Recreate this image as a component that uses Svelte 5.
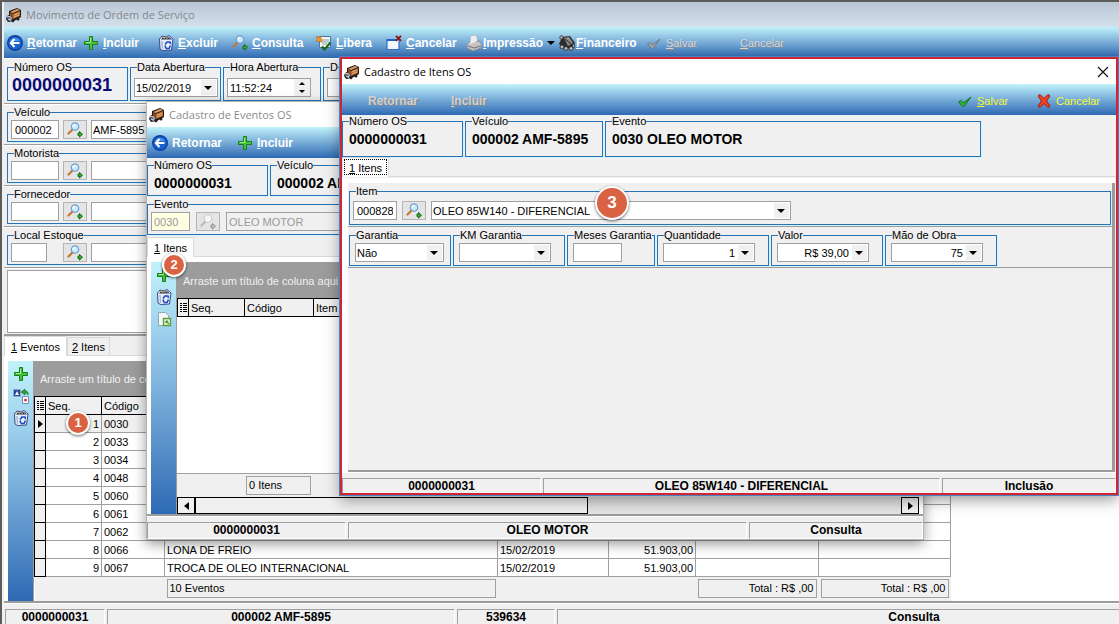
<script>
  const mainTools = [
    { icon: 'back', key: 'R', rest: 'etornar', width: 76 },
    { icon: 'plus', key: 'I', rest: 'ncluir', width: 75 },
    { icon: 'trash', key: 'E', rest: 'xcluir', width: 74 },
    { icon: 'lens', key: 'C', rest: 'onsulta', width: 84 },
    { icon: 'release', key: 'L', rest: 'ibera', width: 70 },
    { icon: 'cancelDoc', key: 'C', rest: 'ancelar', width: 80 },
    { icon: 'printer', key: 'I', rest: 'mpressão', width: 93, arrow: true, tight: true },
    { icon: 'finance', key: 'F', rest: 'inanceiro', width: 87, tight: true },
    { icon: 'checkGray', key: 'S', rest: 'alvar', width: 74, off: true },
    { icon: 'none', key: 'C', rest: 'ancelar', width: 80, off: true }
  ];

  const lookups = [
    { id: 'veiculo', label: 'Veículo', code: '000002', text: 'AMF-5895', width: 48 },
    { id: 'motorista', label: 'Motorista', code: '', text: '', width: 48 },
    { id: 'fornecedor', label: 'Fornecedor', code: '', text: '', width: 48 },
    { id: 'local', label: 'Local Estoque', code: '', text: '', width: 36 }
  ];

  const events = [
    { code: '0030' },
    { code: '0033' },
    { code: '0034' },
    { code: '0048' },
    { code: '0060' },
    { code: '0061' },
    { code: '0062' },
    { code: '0066', name: 'LONA DE FREIO', date: '15/02/2019', km: '51.903,00' },
    { code: '0067', name: 'TROCA DE OLEO INTERNACIONAL', date: '15/02/2019', km: '51.903,00' }
  ];

  const itemFields = [
    { id: 'garantia', label: 'Garantia', value: 'Não', width: 102, input: 89 },
    { id: 'km', label: 'KM Garantia', value: '', width: 112, input: 92 },
    { id: 'meses', label: 'Meses Garantia', value: '', width: 88, input: 49, plain: true },
    { id: 'qtd', label: 'Quantidade', value: '1', width: 112, input: 92, right: true },
    { id: 'valor', label: 'Valor', value: 'R$ 39,00', width: 112, input: 92, right: true },
    { id: 'mao', label: 'Mão de Obra', value: '75', width: 112, input: 92, right: true }
  ];
</script>

{#snippet icon(name)}
  <svg class="icon" viewBox="0 0 16 16" aria-hidden="true">
    {#if name === 'truck'}
      <path d="M3 4 11 1l4 2v7l-7 4-6 1-2-3 1-3 2-1z" fill="#2a1a12" />
      <path d="M4 5 11 2l3 1-7 3z" fill="#d9a066" />
      <path d="M7 7l7-3v5l-7 3z" fill="#b56c34" />
      <path d="M4 5l3 2v5l-3-2z" fill="#8a4d22" />
      <path d="M8 8l5-2M8 10l5-2" stroke="#e2b27c" stroke-width="1" />
      <path d="M1 9l3 0 2 2-1 3-3-1z" fill="#b9c6df" />
      <path d="M2 10l3 1-1 1-3-1z" fill="#33466f" />
      <circle cx="12" cy="12" r="1.5" fill="#222" />
      <circle cx="7" cy="14" r="1.3" fill="#222" />
    {:else if name === 'back'}
      <circle cx="8" cy="8" r="8" fill="#0b3fa0" />
      <circle cx="8" cy="8" r="6.6" fill="#1762cf" />
      <path d="M3 6a5.5 5 0 0 1 10 0z" fill="#4a94ea" />
      <path d="M7.5 4 3.8 8l3.7 4M4 8h8.5" fill="none" stroke="#fff" stroke-width="2" />
    {:else if name === 'plus'}
      <path d="M6.5 1.5h3v5h5v3h-5v5h-3v-5h-5v-3h5z" fill="#46c33a" stroke="#15801b" stroke-width="1" />
      <path d="M7.5 3v4.500H3" fill="none" stroke="#a2ee8a" stroke-width="1" />
    {:else if name === 'trash'}
      <path d="M1.500 4 4 1l4 1 3-1.500L15 4l-1.500 11-9 .5L2 14z" fill="#e9effa" stroke="#35478a" stroke-width="1" />
      <path d="M3 4.500 5 2l3 1 3-1 3 2.500z" fill="#26305e" />
      <path d="M5 2l2 1.500" stroke="#e0a52c" stroke-width="1.500" />
      <path d="M8 3h2" stroke="#47b04b" stroke-width="1.500" />
      <path d="M11 2l1 1.500" stroke="#d35cc0" stroke-width="1.500" />
      <path d="M4 6l.5 8" stroke="#a9b8d8" stroke-width="1.500" />
      <path d="M7 9.500 9 7h3l.5 2M12.500 10.500 11 13.500H8M7 10.500l1 3" fill="none" stroke="#1d48c4" stroke-width="1.600" />
    {:else if name === 'lens' || name === 'lensGray'}
      <g class:washed={name === 'lensGray'}>
        <path d="M5.500 7.500 1.500 11.500" stroke="#c8742c" stroke-width="2.200" stroke-linecap="round" />
        <circle cx="8" cy="4.500" r="3.700" fill="#c9ebfc" stroke="#6c9ccd" stroke-width="1.200" />
        <path d="M6 4.500a2 2 0 0 1 2-2" fill="none" stroke="#fff" stroke-width="1.300" />
        <path d="M11 11h1.500V9.500L15.500 12.300l-3 2.800v-1.500H11z" fill="#35ad2f" stroke="#156b18" stroke-width="1" />
      </g>
    {:else if name === 'release'}
      <path d="M3.500 1.500h11v11h-11z" fill="#f7f4df" stroke="#4c76b4" stroke-width="1" />
      <path d="M6 5h7M6 7h7M6 9h5" stroke="#7fa0cd" stroke-width="1" />
      <path d="M1 1l2 2 1.500-2L6 7 0 6l1.500-1.500L0 3z" fill="#f39b27" stroke="#b55d0a" stroke-width=".6" />
      <path d="M6 11.500l2.500 3 6-7" fill="none" stroke="#14671d" stroke-width="2.200" />
    {:else if name === 'cancelDoc'}
      <path d="M1 4.500h12v10H1z" fill="#f5f9ff" stroke="#2f6fce" stroke-width="1.200" />
      <path d="M1 5h10" stroke="#2261c8" stroke-width="2" />
      <path d="M10 .8l5 5M15 .8l-5 5" stroke="#8d1111" stroke-width="1.900" />
    {:else if name === 'printer'}
      <path d="M4 1l6-1 2 7-6 1z" fill="#f5f5f5" stroke="#aaa" stroke-width=".7" />
      <path d="M1 9l4-3 8 0 3 4-1 3-8 3-6-3z" fill="#c4c4c4" stroke="#858585" stroke-width=".7" />
      <path d="M5 2l5-1 1 5-4 2-3 1z" fill="#ececec" />
      <path d="M2 11l6 2 7-2" fill="none" stroke="#777" stroke-width="1" />
    {:else if name === 'finance'}
      <path d="M3 2l8-1 5 7-4 5-8 0-4-4z" fill="#2c2c2c" />
      <path d="M5 3l5-1 4 6-5 3z" fill="#8e8e8e" />
      <path d="M6 4l6 5" stroke="#444" stroke-width="1.300" />
      <g fill="#b9b9b9" stroke="#222" stroke-width=".8">
        <circle cx="2.500" cy="2.500" r="1.700" />
        <circle cx="3" cy="12" r="2" />
        <circle cx="7" cy="13.500" r="2" />
        <circle cx="12" cy="13.500" r="2" />
        <circle cx="14.500" cy="11" r="1.400" />
      </g>
    {:else if name === 'check'}
      <path d="M1.500 9 4 7.500l2.500 2.500 7.500-6-7.500 10z" fill="#35b53a" stroke="#0d6f1c" stroke-width="1" />
    {:else if name === 'checkGray'}
      <path d="M1.500 9 4 7.500l2.500 2.500 7.500-6-7.500 10z" fill="#a2a8ae" stroke="#71777d" stroke-width="1" />
    {:else if name === 'cross'}
      <path d="M2 3l2-1.500 4 4L12 1.500 14 3l-3.500 5 3.500 5-2 1.500-4-4-4 4L2 13l3.500-5z" fill="#ef4423" stroke="#a31708" stroke-width="1" />
    {:else if name === 'swap'}
      <path d="M.5 1.500h7v7h-7z" fill="#26488f" stroke="#8fa9d8" stroke-width="1" />
      <path d="M2 7l2-4 2 4z" fill="#fff" />
      <path d="M8 4l4-3v2c3 0 3.500 2 3 4-1-2-1.500-2-3-2v2z" fill="#2ba037" stroke="#12661c" stroke-width=".6" />
      <path d="M9.500 8.500h6v7h-6z" fill="#fff" stroke="#6c8cc2" stroke-width="1" />
      <circle cx="12.500" cy="12" r="1.500" fill="#e23a2c" />
    {:else if name === 'page'}
      <path d="M2.500 1.500h7l3 3v10h-10z" fill="#f4f7fa" stroke="#9aa6b4" stroke-width="1" />
      <path d="M7.500 7.500h7v7h-7z" fill="#e2f4d8" stroke="#5f9e3f" stroke-width="1.400" />
      <path d="M10 10h2M10 10v2M10 10l3 3" stroke="#4c8f2d" stroke-width="1.200" />
    {/if}
  </svg>
{/snippet}

{#snippet lookup(id, code, text, width, off)}
  <div class="lookup">
    <input {id} class="field" value={code} disabled={off} style:width="{width}px" />
    <button class="find" disabled={off} aria-label="Pesquisar">{@render icon(off ? 'lensGray' : 'lens')}</button>
    <input class="field wide" aria-label="Descrição" value={text} disabled={off} />
  </div>
{/snippet}

{#snippet combo(id, value, width, right)}
  <div class="combo" style:width="{width}px">
    <select {id} class="field" class:right><option>{value}</option></select>
  </div>
{/snippet}

<div class="desktop">
  <main class="window main-window">
    <header class="titlebar">{@render icon('truck')}<span>Movimento de Ordem de Serviço</span></header>
    <nav class="toolbar">
      {#each mainTools as tool}
        <button class="tool" class:off={tool.off} class:tight={tool.tight} disabled={tool.off} style:width="{tool.width}px">
          {@render icon(tool.icon)}
          <span><u>{tool.key}</u>{tool.rest}</span>
          {#if tool.arrow}<i class="down"></i>{/if}
        </button>
      {/each}
    </nav>

    <div class="row first">
      <fieldset class="w-os">
        <legend>Número OS</legend>
        <output class="order">0000000031</output>
      </fieldset>
      <fieldset class="w-date">
        <legend><label for="data">Data Abertura</label></legend>
        {@render combo('data', '15/02/2019', 84, false)}
      </fieldset>
      <fieldset class="w-time">
        <legend><label for="hora">Hora Abertura</label></legend>
        <div class="spinner">
          <input id="hora" class="field" value="11:52:24" />
          <span class="arrows"><i class="up"></i><i class="down"></i></span>
        </div>
      </fieldset>
      <fieldset class="grow">
        <legend><label for="fechamento">D</label></legend>
        {@render combo('fechamento', '', 84, false)}
      </fieldset>
    </div>

    {#each lookups as item}
      <div class="row">
        <fieldset class="grow">
          <legend><label for={item.id}>{item.label}</label></legend>
          {@render lookup(item.id, item.code, item.text, item.width, false)}
        </fieldset>
      </div>
    {/each}

    <div class="memo"><textarea aria-label="Observação"></textarea></div>

    <div class="tabs">
      <button class="tab active"><u>1</u> Eventos</button>
      <button class="tab"><u>2</u> Itens</button>
    </div>

    <section class="sheet">
      <div class="side">
        <button aria-label="Incluir evento">{@render icon('plus')}</button>
        <button aria-label="Trocar evento">{@render icon('swap')}</button>
        <button aria-label="Excluir evento">{@render icon('trash')}</button>
      </div>
      <div class="grid">
        <div class="group-bar">Arraste um título de coluna aqui</div>
        <table class="events">
          <colgroup>
            <col class="c-mark" /><col class="c-seq" /><col class="c-code" /><col class="c-name" />
            <col class="c-date" /><col class="c-km" /><col class="c-total" /><col class="c-sum" />
          </colgroup>
          <thead>
            <tr><th class="mark"><i class="list"></i></th><th>Seq.</th><th>Código</th><th></th><th></th><th></th><th></th><th></th></tr>
          </thead>
          <tbody>
            {#each events as event, i}
              <tr>
                <td class="mark">{#if i === 0}<i class="pointer"></i>{/if}</td>
                <td class="num" class:current={i === 0}>{i + 1}</td>
                <td class:current={i === 0}>{event.code}</td>
                <td>{event.name ?? ''}</td>
                <td>{event.date ?? ''}</td>
                <td class="num">{event.km ?? ''}</td>
                <td></td>
                <td></td>
              </tr>
            {/each}
          </tbody>
          <tfoot>
            <tr>
              <td colspan="3"></td>
              <td><div class="box">10 Eventos</div></td>
              <td colspan="2"></td>
              <td><div class="box num">Total : R$ ,00</div></td>
              <td><div class="box num">Total : R$ ,00</div></td>
            </tr>
          </tfoot>
        </table>
      </div>
    </section>

    <footer class="status main-status">
      <span class="s-a">0000000031</span>
      <span class="s-b">000002 AMF-5895</span>
      <span class="s-c">539634</span>
      <span class="s-d">Consulta</span>
    </footer>
  </main>

  <section class="window events-window">
    <header class="titlebar">{@render icon('truck')}<span>Cadastro de Eventos OS</span></header>
    <nav class="toolbar">
      <button class="tool w-back">{@render icon('back')}<span>Retornar</span></button>
      <button class="tool">{@render icon('plus')}<span><u>I</u>ncluir</span></button>
    </nav>
    <div class="heads">
      <fieldset class="w-os">
        <legend>Número OS</legend>
        <output class="strong">0000000031</output>
      </fieldset>
      <fieldset class="grow">
        <legend>Veículo</legend>
        <output class="strong">000002 AMF-5895</output>
      </fieldset>
    </div>
    <div class="heads second">
      <fieldset class="grow">
        <legend><label for="evento">Evento</label></legend>
        {@render lookup('evento', '0030', 'OLEO MOTOR', 39, true)}
      </fieldset>
    </div>
    <div class="tabs">
      <button class="tab active"><u>1</u> Itens</button>
    </div>
    <div class="sheet">
      <div class="side">
        <button aria-label="Incluir item">{@render icon('plus')}</button>
        <button aria-label="Excluir item">{@render icon('trash')}</button>
        <button aria-label="Exportar">{@render icon('page')}</button>
      </div>
      <div class="grid">
        <div class="group-bar">Arraste um título de coluna aqui</div>
        <table class="items">
          <colgroup><col class="c-mark" /><col class="c-seq" /><col class="c-item" /><col /></colgroup>
          <thead>
            <tr><th class="mark"><i class="list"></i></th><th>Seq.</th><th>Código</th><th>Item</th></tr>
          </thead>
        </table>
        <div class="blank"></div>
        <div class="summary"><div class="box">0 Itens</div></div>
        <div class="scroll">
          <button aria-label="Rolar para a esquerda"><i class="left"></i></button>
          <div class="thumb"></div>
          <button aria-label="Rolar para a direita"><i class="pointer"></i></button>
        </div>
      </div>
    </div>
    <footer class="status">
      <span class="s-1">0000000031</span>
      <span class="grow">OLEO MOTOR</span>
      <span class="s-3">Consulta</span>
    </footer>
  </section>

  <section class="window items-window">
    <header class="titlebar">
      {@render icon('truck')}<span class="grow">Cadastro de Itens OS</span>
      <button class="close" aria-label="Fechar">
        <svg viewBox="0 0 12 12"><path d="M1 1l10 10M11 1L1 11" stroke="#111" stroke-width="1.200" /></svg>
      </button>
    </header>
    <nav class="toolbar">
      <button class="tool off strong-off w-return" disabled><span>Retornar</span></button>
      <button class="tool off strong-off grow" disabled><span><u>I</u>ncluir</span></button>
      <button class="tool yellow w-save">{@render icon('check')}<span><u>S</u>alvar</span></button>
      <button class="tool yellow w-cancel">{@render icon('cross')}<span>Cancelar</span></button>
    </nav>
    <div class="heads">
      <fieldset class="w-os">
        <legend>Número OS</legend>
        <output class="strong">0000000031</output>
      </fieldset>
      <fieldset class="w-vehicle">
        <legend>Veículo</legend>
        <output class="strong">000002 AMF-5895</output>
      </fieldset>
      <fieldset class="w-event">
        <legend>Evento</legend>
        <output class="strong">0030 OLEO MOTOR</output>
      </fieldset>
    </div>
    <div class="tabs">
      <button class="tab active focus"><u>1</u> Itens</button>
    </div>
    <div class="form">
      <div class="line">
        <fieldset class="grow">
          <legend><label for="item">Item</label></legend>
          <div class="lookup">
            <input id="item" class="field" value="000828" style:width="44px" />
            <button class="find" aria-label="Pesquisar item">{@render icon('lens')}</button>
            <div class="combo w-item">
              <select class="field" aria-label="Descrição do item"><option>OLEO 85W140 - DIFERENCIAL</option></select>
            </div>
          </div>
        </fieldset>
      </div>
      <div class="line values">
        {#each itemFields as f}
          <fieldset style:width="{f.width}px">
            <legend><label for={f.id}>{f.label}</label></legend>
            {#if f.plain}
              <input id={f.id} class="field" style:width="{f.input}px" />
            {:else}
              {@render combo(f.id, f.value, f.input, f.right)}
            {/if}
          </fieldset>
        {/each}
      </div>
    </div>
    <footer class="status">
      <span class="s-1">0000000031</span>
      <span class="grow">OLEO 85W140 - DIFERENCIAL</span>
      <span class="s-3">Inclusão</span>
    </footer>
  </section>

  <div class="badge one">1</div>
  <div class="badge two">2</div>
  <div class="badge three">3</div>
</div>

<style>
  :global(body) {
    margin: 0;
    overflow: hidden;
  }

  * {
    box-sizing: border-box;
  }

  .desktop {
    position: relative;
    height: 100vh;
    overflow: hidden;
    background: #f0f0f0;
    color: #000;
    font: 11px/14px "Liberation Sans", Arial, sans-serif;
  }

  button,
  input,
  select,
  textarea {
    font: inherit;
    color: inherit;
    margin: 0;
    padding: 0;
    border: 0;
    border-radius: 0;
    background: none;
  }

  .grow {
    flex: 1;
  }

  .icon {
    width: 16px;
    height: 16px;
    flex: none;
    display: block;
  }

  .washed {
    filter: grayscale(1) brightness(1.3);
    opacity: 0.7;
  }

  .window {
    display: flex;
    flex-direction: column;
    background: #f0f0f0;
  }

  .main-window {
    border-top: 2px solid #5c5c5c;
    border-left: 2px solid #5c5c5c;
    padding-left: 2px;
  }

  .events-window {
    position: absolute;
    left: 146px;
    top: 101px;
    width: 778px;
    height: 439px;
    border: 1px solid #b4b4b4;
    box-shadow: 0 4px 12px rgba(0, 0, 0, 0.4);
  }

  .items-window {
    position: absolute;
    left: 340px;
    right: 1px;
    top: 57px;
    height: 438px;
    border: 2px solid #cf2636;
    box-shadow: 0 0 0 1px #4c82bd, 0 5px 14px rgba(0, 0, 0, 0.4);
  }

  .titlebar {
    flex: none;
    display: flex;
    align-items: center;
    gap: 4px;
    height: 25px;
    padding: 0 7px 0 2px;
    background: #fff;
    color: #8c8c8c;
    font: 11px/16px "Open Sans", "Noto Sans", sans-serif;
  }

  .main-window .titlebar {
    background: linear-gradient(#bac6d4, #d4e0ec);
    color: #85898e;
  }

  .items-window .titlebar {
    color: #000;
  }

  .close {
    width: 12px;
    height: 12px;
  }

  .close svg {
    display: block;
  }

  .toolbar {
    flex: none;
    display: flex;
    height: 31px;
    padding-left: 3px;
    background: linear-gradient(#c2f3fc, #8dc0e2 35%, #2e6ab4);
  }

  .tool {
    display: flex;
    align-items: center;
    gap: 4px;
    color: #fff;
    font-size: 12px;
    font-weight: bold;
    text-align: left;
    white-space: nowrap;
  }

  .tool.tight {
    gap: 1px;
  }

  .tool .down {
    margin-left: 3px;
  }

  .off {
    color: #d3d8dd;
    font-size: 11px;
    font-weight: normal;
    text-shadow: 1px 1px 0 #8b8f94;
  }

  .strong-off {
    color: #d2d2d2;
    font-size: 12px;
    font-weight: bold;
    text-shadow: 1px 1px 0 #858585;
    padding-top: 2px;
  }

  .yellow {
    color: #f4f836;
    font-size: 11px;
    font-weight: normal;
    padding-top: 2px;
  }

  .w-back {
    width: 85px;
  }

  .events-window .toolbar {
    padding-left: 5px;
  }

  .items-window .toolbar {
    padding-left: 26px;
  }

  .w-return {
    width: 83px;
  }

  .w-save {
    width: 79px;
  }

  .w-cancel {
    width: 80px;
  }

  .down,
  .up {
    width: 0;
    height: 0;
    border: 4px solid transparent;
    border-top-color: #000;
    border-bottom: 0;
  }

  .up {
    border: 4px solid transparent;
    border-bottom-color: #000;
    border-top: 0;
  }

  .pointer,
  .left {
    display: inline-block;
    border: 4px solid transparent;
    border-left: 5px solid #000;
    border-right: 0;
  }

  .left {
    border-left: 0;
    border-right: 5px solid #000;
  }

  .row {
    flex: none;
    display: flex;
    gap: 2px;
    height: 41px;
    padding: 1px 3px 2px;
    border-top: 1px solid #fff;
    border-bottom: 1px solid #9c9c9c;
  }

  .row.first {
    height: 46px;
    padding-top: 2px;
  }

  fieldset {
    min-width: 0;
    margin: 0;
    padding: 0 3px;
    border: 1px solid #2873b5;
    box-shadow: 1px 1px 0 #d2f3fb;
    overflow: hidden;
  }

  legend {
    margin-left: 3px;
    padding: 0;
    line-height: 12px;
    white-space: nowrap;
  }

  .w-os {
    width: 121px;
  }

  .w-date {
    width: 91px;
  }

  .w-time {
    width: 98px;
  }

  .w-vehicle {
    width: 138px;
  }

  .w-event {
    width: 376px;
  }

  .w-item {
    width: 360px;
  }

  output {
    display: block;
    font-weight: bold;
    white-space: nowrap;
  }

  .order {
    padding: 2px 1px;
    color: #0a0a78;
    font-size: 18px;
    line-height: 20px;
  }

  .strong {
    padding: 4px 3px;
    font-size: 14px;
    line-height: 16px;
  }

  .field {
    display: block;
    width: 100%;
    height: 19px;
    padding: 0 3px;
    border: 1px solid #a0a0a0;
    background: #fff;
    line-height: 16px;
  }

  .first .combo,
  .first .spinner {
    margin-top: 5px;
  }

  .combo {
    position: relative;
  }

  select.field {
    appearance: none;
    padding: 0 19px 0 1px;
  }

  select.right {
    text-align-last: right;
  }

  .combo::before {
    content: "";
    position: absolute;
    right: 2px;
    top: 2px;
    width: 15px;
    height: 15px;
    background: #f0f0f0;
    pointer-events: none;
  }

  .combo::after {
    content: "";
    position: absolute;
    right: 6px;
    top: 8px;
    border: 4px solid transparent;
    border-top-color: #000;
    border-bottom: 0;
    pointer-events: none;
  }

  .spinner {
    display: flex;
    width: 84px;
    height: 19px;
    border: 1px solid #a0a0a0;
    background: #fff;
  }

  .spinner .field {
    flex: 1;
    min-width: 0;
    height: 17px;
    padding: 0 2px;
    border: 0;
  }

  .arrows {
    display: flex;
    flex-direction: column;
    align-items: center;
    justify-content: space-around;
    width: 16px;
    background: #f0f0f0;
  }

  .arrows .up,
  .arrows .down {
    border-left-width: 3px;
    border-right-width: 3px;
  }

  .arrows .up {
    border-bottom-width: 3px;
  }

  .arrows .down {
    border-top-width: 3px;
  }

  .lookup {
    display: flex;
    gap: 4px;
    padding-top: 2px;
  }

  .lookup .field {
    flex: none;
  }

  .lookup .wide {
    flex: 1;
    width: auto;
    padding: 0 1px;
  }

  #local {
    margin-right: 12px;
  }

  .find {
    display: flex;
    flex: none;
    align-items: center;
    justify-content: center;
    width: 24px;
    height: 19px;
    border: 1px solid #b4b4b4;
    background: #e4e4e4;
  }

  .field:disabled {
    color: #9a9a9a;
    background: #f0f0f0;
  }

  #evento {
    background: #ffffe1;
  }

  .events-window .lookup {
    gap: 6px;
  }

  .events-window .lookup .field {
    padding: 0 2px;
  }

  .memo {
    flex: none;
    padding: 1px 3px;
    border-top: 1px solid #fff;
    border-bottom: 2px solid #9c9c9c;
  }

  textarea {
    display: block;
    width: 100%;
    height: 63px;
    border: 1px solid #a0a0a0;
    background: #fff;
    resize: none;
  }

  .tabs {
    flex: none;
    display: flex;
    align-items: flex-end;
    height: 20px;
    border-bottom: 1px solid #dadada;
  }

  .tab {
    height: 18px;
    padding: 0 4px;
    border: 1px solid #dadada;
    border-bottom: 0;
    white-space: nowrap;
  }

  .tab.active {
    height: 20px;
    padding: 0 6px;
    background: #fff;
    margin-bottom: -1px;
  }

  .focus {
    outline: 1px dotted #000;
    outline-offset: -3px;
  }

  .sheet {
    flex: 1;
    display: flex;
    padding: 5px 4px 0;
    background: #fff;
    border-bottom: 2px solid #9c9c9c;
  }

  .main-window .sheet {
    flex: none;
    padding: 5px 0 0 4px;
  }

  .side {
    flex: none;
    display: flex;
    flex-direction: column;
    align-items: center;
    gap: 6px;
    width: 25px;
    padding-top: 5px;
    background: linear-gradient(#c2f3fc, #8cc0e4 40%, #2e6ab4);
  }

  .grid {
    flex: 1;
    min-width: 0;
    display: flex;
    flex-direction: column;
    border-left: 1px solid #9c9c9c;
  }

  .group-bar {
    width: 917px;
    height: 35px;
    padding: 11px 6px;
    background: #9c9c9c;
    color: #f0f0f0;
    white-space: nowrap;
  }

  .events-window .group-bar {
    width: auto;
    height: 36px;
    padding-top: 12px;
  }

  table {
    border-collapse: collapse;
    table-layout: fixed;
  }

  .events {
    width: 917px;
  }

  .items {
    width: 100%;
  }

  .c-mark {
    width: 11px;
  }

  .c-seq {
    width: 56px;
  }

  .c-code {
    width: 63px;
  }

  .c-item {
    width: 69px;
  }

  .c-name {
    width: 333px;
  }

  .c-date {
    width: 111px;
  }

  .c-km {
    width: 87px;
  }

  .c-total {
    width: 123px;
  }

  th,
  td {
    height: 18px;
    padding: 0 2px;
    border: 1px solid #a0a0a0;
    background: #fff;
    text-align: left;
    font-weight: normal;
    white-space: nowrap;
  }

  th {
    border-color: #000;
    background: #f0f0f0;
  }

  td.mark {
    border-color: #000;
    background: #f0f0f0;
  }

  .mark {
    text-align: center;
    line-height: 8px;
  }

  .list {
    display: inline-block;
    width: 7px;
    height: 9px;
    background:
      linear-gradient(#f0f0f0, #f0f0f0) 2px 0 / 1px 9px no-repeat,
      repeating-linear-gradient(#000 0 1px, #f0f0f0 1px 2px);
  }

  .current {
    background: #f0f0f0;
  }

  .num {
    text-align: right;
  }

  tfoot td {
    height: 24px;
    border: 0;
    background: #f0f0f0;
  }

  .box {
    height: 19px;
    padding: 1px 2px;
    border: 1px solid #a0a0a0;
    background: #f0f0f0;
    line-height: 15px;
  }

  .blank {
    flex: 1;
  }

  .summary {
    height: 24px;
    padding: 2px 69px;
    border-top: 1px solid #a0a0a0;
    background: #f0f0f0;
  }

  .summary .box {
    width: 65px;
  }

  .scroll {
    display: flex;
    justify-content: space-between;
    height: 17px;
    background: #e4e4e4;
  }

  .scroll button {
    display: flex;
    align-items: center;
    justify-content: center;
    width: 18px;
    border: 1px solid #000;
    background: #f0f0f0;
  }

  .thumb {
    width: 393px;
    margin-right: auto;
    border: 1px solid #000;
    background: #f0f0f0;
  }

  .status {
    flex: none;
    display: flex;
    gap: 2px;
    padding-top: 5px;
    border-top: 1px solid #fff;
    font-size: 12px;
    font-weight: bold;
    text-align: center;
  }

  .status span {
    height: 17px;
    border: 1px solid #a0a0a0;
    border-right-color: #fff;
    border-bottom-color: #fff;
    line-height: 15px;
  }

  .items-window .status span {
    height: 15px;
    border-bottom: 0;
  }

  .main-status {
    padding-left: 1px;
  }

  .main-status span {
    flex: none;
    height: 20px;
  }

  .s-1 {
    width: 199px;
  }

  .s-3 {
    width: 174px;
  }

  .s-a {
    width: 100px;
  }

  .s-b {
    width: 348px;
  }

  .s-c {
    width: 98px;
  }

  /* last panel runs past the window edge */
  .s-d {
    width: 714px;
  }

  .heads {
    flex: none;
    display: flex;
    gap: 2px;
    height: 38px;
    padding: 1px 1px 0 0;
  }

  .heads.second {
    height: 41px;
    padding: 2px 1px 2px 0;
  }

  .items-window .heads {
    height: 42px;
    padding-top: 0;
  }

  .items-window .heads fieldset {
    height: 42px;
  }

  .form {
    flex: 1;
    margin: 6px 1px 0 6px;
    border-right: 3px solid #9c9c9c;
    border-bottom: 2px solid #9c9c9c;
    background: #f0f0f0;
    box-shadow: -6px 0 0 #fff, -6px -5px 0 #fff, 0 -5px 0 #fff;
  }

  .line {
    display: flex;
    gap: 2px;
    padding: 2px 1px 1px;
    border-bottom: 1px solid #9c9c9c;
  }

  .line fieldset {
    height: 40px;
  }

  .values fieldset {
    height: 37px;
    padding: 2px 5px 0;
  }

  .values legend {
    margin-left: 1px;
  }

  .items-window .lookup {
    gap: 5px;
    padding-top: 4px;
  }

  .badge {
    position: absolute;
    width: 24px;
    height: 24px;
    border: 2px solid #fff;
    border-radius: 50%;
    background: #d96243;
    color: #fff;
    box-shadow: 0 1px 3px rgba(0, 0, 0, 0.6);
    font-size: 13px;
    font-weight: bold;
    line-height: 20px;
    text-align: center;
  }

  .one {
    left: 66px;
    top: 411px;
  }

  .two {
    left: 162px;
    top: 253px;
  }

  .three {
    left: 595px;
    top: 186px;
    width: 34px;
    height: 34px;
    font-size: 17px;
    line-height: 30px;
  }
</style>
